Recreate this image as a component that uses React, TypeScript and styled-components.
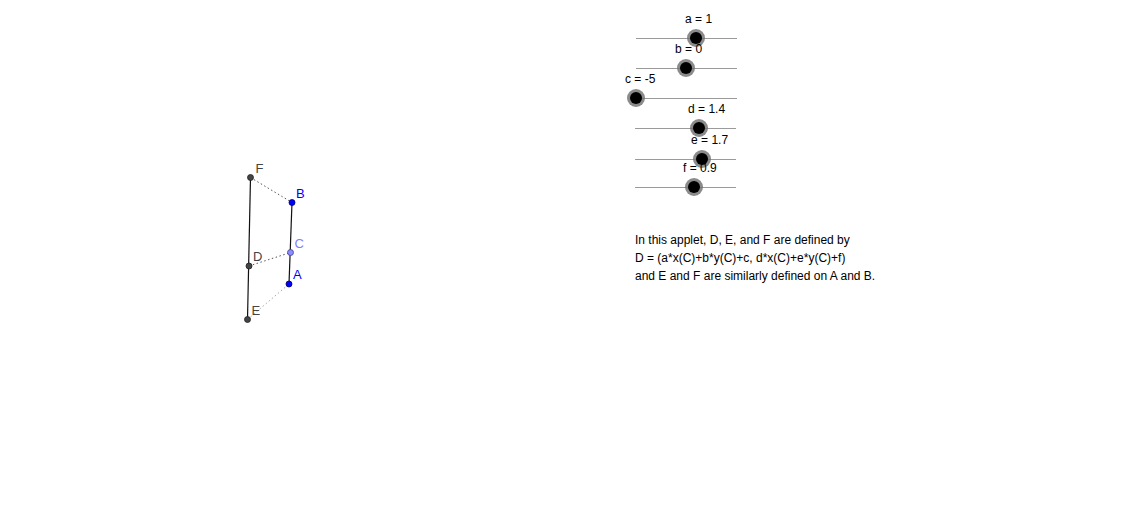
import React from 'react';
import styled, { createGlobalStyle } from 'styled-components';

const GlobalStyle = createGlobalStyle`
  html, body {
    margin: 0;
    padding: 0;
    background: #ffffff;
  }
  body {
    font-family: 'Liberation Sans', Arial, sans-serif;
  }
`;

const Canvas = styled.div`
  position: relative;
  width: 1142px;
  height: 510px;
  overflow: hidden;
  background: #ffffff;
`;

const Drawing = styled.svg`
  position: absolute;
  left: 0;
  top: 0;
`;

const SliderRoot = styled.div<{ $x: number; $y: number; $w: number }>`
  position: absolute;
  left: ${p => p.$x}px;
  top: ${p => p.$y}px;
  width: ${p => p.$w}px;
  height: 1px;
`;

const Track = styled.div`
  width: 100%;
  height: 1px;
  background: #9a9a9a;
`;

const Knob = styled.div<{ $at: number }>`
  position: absolute;
  left: ${p => p.$at - 6}px;
  top: -6px;
  width: 12px;
  height: 12px;
  border-radius: 50%;
  background: #000000;
  box-shadow: 0 0 0 3px rgba(110, 110, 110, 0.8);
`;

const SliderLabel = styled.span<{ $at: number }>`
  position: absolute;
  left: ${p => p.$at - 11}px;
  top: -26px;
  font-size: 12px;
  line-height: 14px;
  color: #000000;
  white-space: nowrap;
`;

const Note = styled.div`
  position: absolute;
  left: 635px;
  top: 231px;
  font-size: 12px;
  line-height: 18px;
  color: #000000;
`;

const NoteLine = styled.div`
  white-space: nowrap;
`;

interface SliderProps {
  name: string;
  value: string;
  x: number;
  y: number;
  width: number;
  knob: number;
}

function Slider({ name, value, x, y, width, knob }: SliderProps) {
  const at = knob - x;
  return (
    <SliderRoot $x={x} $y={y} $w={width}>
      <Track />
      <Knob $at={at} />
      <SliderLabel $at={at}>
        {name} = {value}
      </SliderLabel>
    </SliderRoot>
  );
}

const sliders: SliderProps[] = [
  { name: 'a', value: '1', x: 636, y: 38, width: 101, knob: 696 },
  { name: 'b', value: '0', x: 636, y: 68, width: 101, knob: 686 },
  { name: 'c', value: '-5', x: 636, y: 98, width: 101, knob: 636 },
  { name: 'd', value: '1.4', x: 635, y: 128, width: 101, knob: 699 },
  { name: 'e', value: '1.7', x: 635, y: 159, width: 101, knob: 702 },
  { name: 'f', value: '0.9', x: 635, y: 187, width: 101, knob: 694 },
];

type Pt = { x: number; y: number };

const P: Record<string, Pt> = {
  F: { x: 250.5, y: 177.5 },
  B: { x: 292, y: 202.5 },
  C: { x: 290.5, y: 252.5 },
  D: { x: 249, y: 266 },
  A: { x: 289, y: 284 },
  E: { x: 247.5, y: 319.5 },
};

const points = [
  { id: 'F', fill: '#444444', stroke: '#222222', label: '#444444', dx: 5, dy: -5 },
  { id: 'B', fill: '#0000ff', stroke: '#000066', label: '#0000ff', dx: 4, dy: -5 },
  { id: 'C', fill: '#8c8cff', stroke: '#444488', label: '#7f7fff', dx: 4, dy: -5 },
  { id: 'D', fill: '#444444', stroke: '#222222', label: '#444444', dx: 4, dy: -5 },
  { id: 'A', fill: '#0000ff', stroke: '#000066', label: '#0000ff', dx: 4, dy: -5 },
  { id: 'E', fill: '#444444', stroke: '#222222', label: '#444444', dx: 4, dy: -5 },
];

function Construction() {
  return (
    <Drawing width={1142} height={510} viewBox='0 0 1142 510'>
      <line x1={P.F.x} y1={P.F.y} x2={P.E.x} y2={P.E.y} stroke='#111' strokeWidth={1.2} />
      <line x1={P.B.x} y1={P.B.y} x2={P.A.x} y2={P.A.y} stroke='#111' strokeWidth={1.2} />
      <line x1={P.F.x} y1={P.F.y} x2={P.B.x} y2={P.B.y} stroke='#555' strokeWidth={1} strokeDasharray='1.5 2.5' />
      <line x1={P.D.x} y1={P.D.y} x2={P.C.x} y2={P.C.y} stroke='#555' strokeWidth={1} strokeDasharray='1.5 2.5' />
      <line x1={P.E.x} y1={P.E.y} x2={P.A.x} y2={P.A.y} stroke='#aaa' strokeWidth={1} strokeDasharray='1.5 2.5' />
      {points.map(pt => (
        <g key={pt.id}>
          <circle cx={P[pt.id].x} cy={P[pt.id].y} r={3} fill={pt.fill} stroke={pt.stroke} strokeWidth={0.8} />
          <text
            x={P[pt.id].x + pt.dx}
            y={P[pt.id].y + pt.dy}
            fill={pt.label}
            fontSize={13}
            fontFamily="'Liberation Sans', Arial, sans-serif"
          >
            {pt.id}
          </text>
        </g>
      ))}
    </Drawing>
  );
}

export default function App() {
  return (
    <>
      <GlobalStyle />
      <Canvas>
        <Construction />
        {sliders.map(s => (
          <Slider key={s.name} {...s} />
        ))}
        <Note>
          <NoteLine>In this applet, D, E, and F are defined by</NoteLine>
          <NoteLine>D = (a*x(C)+b*y(C)+c, d*x(C)+e*y(C)+f)</NoteLine>
          <NoteLine>and E and F are similarly defined on A and B.</NoteLine>
        </Note>
      </Canvas>
    </>
  );
}
